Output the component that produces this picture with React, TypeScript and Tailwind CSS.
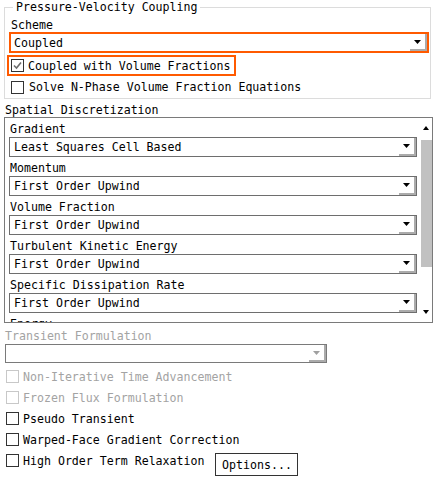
import React from "react";

const FONT = "font-['DejaVu_Sans_Mono',monospace] text-[11.6px]";

function Arrow({ color = "#000" }: { color?: string }) {
  return (
    <svg width="7" height="4" viewBox="0 0 7 4">
      <polygon points="0,0 7,0 3.5,4" fill={color} />
    </svg>
  );
}

function DropButton({ disabled }: { disabled?: boolean }) {
  return (
    <div className="w-[17px] h-full border-r-2 border-b-2 border-[#ababab] flex items-center justify-center shrink-0">
      <Arrow color={disabled ? "#a0a0a0" : "#000"} />
    </div>
  );
}

function Select({ text }: { text: string }) {
  return (
    <div className="ml-[4px] mr-[2px] h-[20px] border border-[#6e6e6e] bg-white flex items-stretch">
      <div className="flex-1 pl-[4px] flex items-center leading-[14px] whitespace-nowrap overflow-hidden">
        {text}
      </div>
      <DropButton />
    </div>
  );
}

function Checkbox({ checked, disabled }: { checked?: boolean; disabled?: boolean }) {
  return (
    <span
      className={
        "w-[13px] h-[13px] shrink-0 border bg-white flex items-center justify-center " +
        (disabled ? "border-[#c8c8c8]" : "border-[#333333]")
      }
    >
      {checked && (
        <svg width="11" height="11" viewBox="0 0 11 11">
          <polyline points="2,5.5 4.5,8 9,2.5" fill="none" stroke="#6e6e6e" strokeWidth="1.6" />
        </svg>
      )}
    </span>
  );
}

function CheckRow({ label, disabled, children }: { label: string; disabled?: boolean; children?: React.ReactNode }) {
  return (
    <div className="flex items-start h-[21px] pl-[6px]">
      <div className="flex items-center h-[21px] gap-[4px]">
        <Checkbox disabled={disabled} />
        <span className={"leading-[14px] whitespace-nowrap " + (disabled ? "text-[#a3a3a3]" : "text-black")}>{label}</span>
      </div>
      {children}
    </div>
  );
}

const rows: [string, string][] = [
  ["Gradient", "Least Squares Cell Based"],
  ["Momentum", "First Order Upwind"],
  ["Volume Fraction", "First Order Upwind"],
  ["Turbulent Kinetic Energy", "First Order Upwind"],
  ["Specific Dissipation Rate", "First Order Upwind"],
];

export default function App() {
  return (
    <div className={"w-[436px] h-[479px] bg-white overflow-hidden text-black " + FONT}>
      {/* Pressure-Velocity Coupling */}
      <fieldset className="ml-[4px] w-[427px] h-[99px] min-w-0 border border-[#dcdcdc]">
        <legend className="ml-[8px] px-[3px] leading-[14px] whitespace-nowrap">Pressure-Velocity Coupling</legend>
        <div className="pt-[4px] pl-[6px] leading-[14px]">Scheme</div>
        <div className="ml-[4px] mr-[1px] h-[21px] border-2 border-[#ff5a00] bg-white flex items-stretch">
          <div className="flex-1 pl-[3px] flex items-center leading-[14px]">Coupled</div>
          <DropButton />
        </div>
        <div className="mt-[2px] ml-[2px] w-[229px] h-[21px] border-2 border-[#ff5a00] flex items-center pl-[2px] gap-[4px]">
          <Checkbox checked />
          <span className="leading-[14px] whitespace-nowrap">Coupled with Volume Fractions</span>
        </div>
        <div className="mt-[1px] h-[20px] flex items-center pl-[6px] gap-[5px]">
          <Checkbox />
          <span className="leading-[14px] whitespace-nowrap">Solve N-Phase Volume Fraction Equations</span>
        </div>
      </fieldset>

      {/* Spatial Discretization */}
      <div className="pt-[4px] pl-[5px] leading-[14px]">Spatial Discretization</div>
      <div className="ml-[4px] w-[429px] h-[206px] border border-[#7a7a7a] flex">
        <div className="flex-1 overflow-hidden pt-[4px]">
          {rows.map(([label, value]) => (
            <div key={label} className="mb-[4px]">
              <div className="pl-[5px] leading-[15px] whitespace-nowrap">{label}</div>
              <Select text={value} />
            </div>
          ))}
          <div className="pl-[5px] leading-[15px]">Energy</div>
        </div>
        <div className="w-[13px] flex flex-col shrink-0">
          <div className="h-[20px] flex items-center justify-center">
            <span className="w-0 h-0 border-x-[3px] border-x-transparent border-b-[4px] border-b-black" />
          </div>
          <div className="flex-1 pt-[2px] pl-[2px]">
            <div className="h-[127px] bg-[#c1c1c1]" />
          </div>
          <div className="h-[20px] flex items-center justify-center">
            <span className="w-0 h-0 border-x-[3px] border-x-transparent border-t-[4px] border-t-black" />
          </div>
        </div>
      </div>

      {/* Transient Formulation */}
      <div className="pt-[6px] pl-[5px] leading-[14px] text-[#a3a3a3]">Transient Formulation</div>
      <div className="mt-[1px] ml-[5px] w-[322px] h-[19px] border border-[#7a7a7a] bg-white flex items-stretch">
        <div className="flex-1" />
        <DropButton disabled />
      </div>

      <div className="mt-[3px]">
        <CheckRow label="Non-Iterative Time Advancement" disabled />
        <CheckRow label="Frozen Flux Formulation" disabled />
        <CheckRow label="Pseudo Transient" />
        <CheckRow label="Warped-Face Gradient Correction" />
        <CheckRow label="High Order Term Relaxation">
          <button className="ml-[11px] mt-[3px] w-[83px] h-[23px] border border-[#333333] bg-white flex items-center justify-center leading-[14px] cursor-default">
            Options...
          </button>
        </CheckRow>
      </div>
    </div>
  );
}
